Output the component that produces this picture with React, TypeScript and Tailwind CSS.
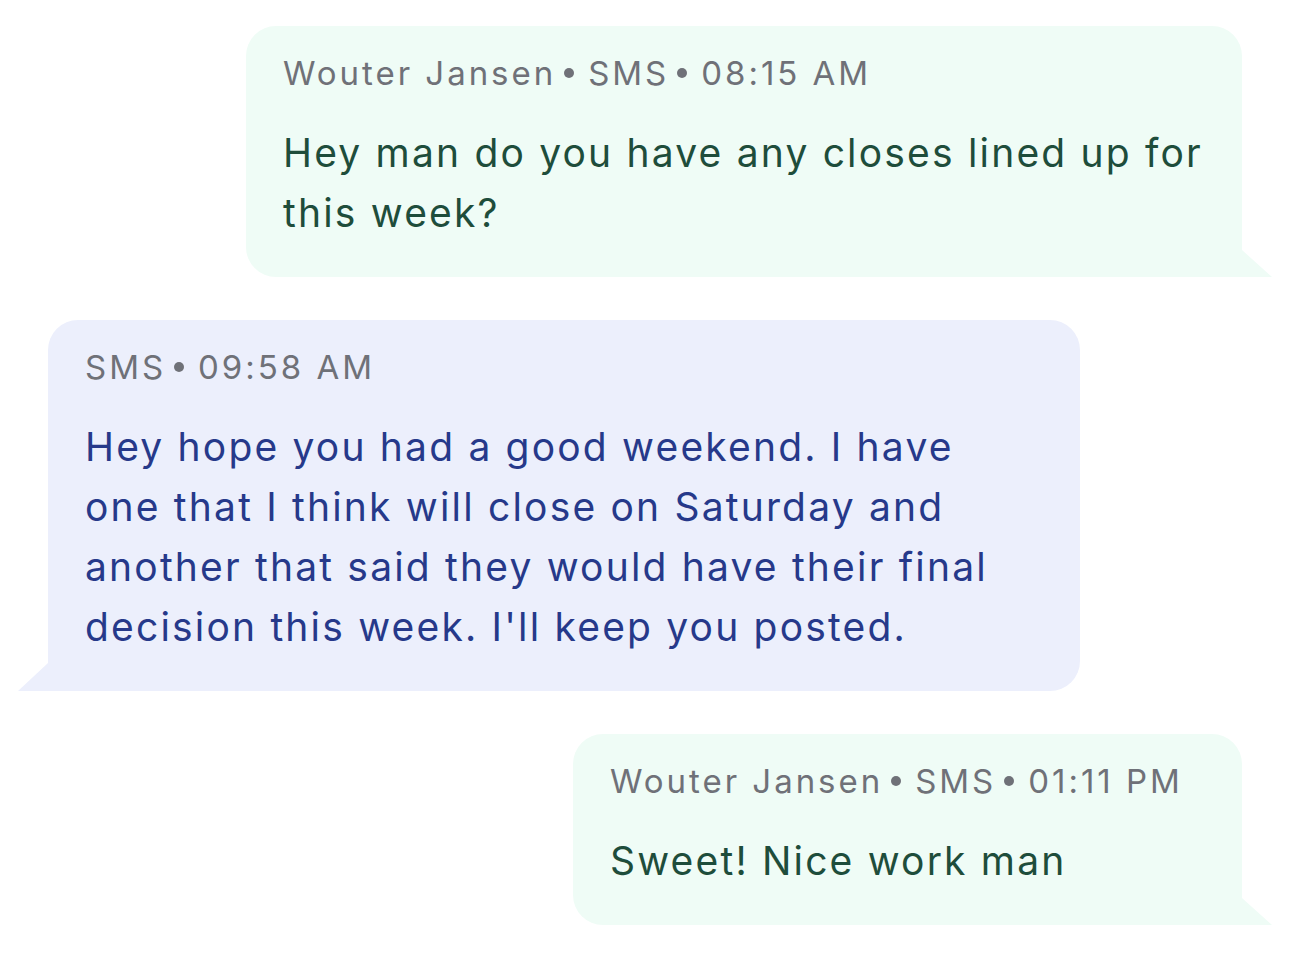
import React from 'react';

type Msg = {
  side: 'out' | 'in';
  meta: string[];
  lines: string[];
  width: string;
};

const messages: Msg[] = [
  {
    side: 'out',
    meta: ['Wouter Jansen', 'SMS', '08:15 AM'],
    lines: ['Hey man do you have any closes lined up for', 'this week?'],
    width: 'w-[996px]',
  },
  {
    side: 'in',
    meta: ['SMS', '09:58 AM'],
    lines: [
      'Hey hope you had a good weekend. I have',
      'one that I think will close on Saturday and',
      'another that said they would have their final',
      "decision this week. I'll keep you posted.",
    ],
    width: 'w-[1032px]',
  },
  {
    side: 'out',
    meta: ['Wouter Jansen', 'SMS', '01:11 PM'],
    lines: ['Sweet! Nice work man'],
    width: 'w-[669px]',
  },
];

// little corner tail under the bubble
const Tail = ({ side }: { side: 'out' | 'in' }) =>
  side === 'out' ? (
    <svg className="absolute bottom-0 -right-[30px] w-[30px] h-[27px]" viewBox="0 0 30 27">
      <path d="M0 0 L30 27 L0 27 Z" fill="#effcf6" />
    </svg>
  ) : (
    <svg className="absolute bottom-0 -left-[30px] w-[30px] h-[28px]" viewBox="0 0 30 28">
      <path d="M30 0 L0 28 L30 28 Z" fill="#eceffc" />
    </svg>
  );

const Bubble = ({ msg }: { msg: Msg }) => {
  const out = msg.side === 'out';
  return (
    <div
      className={`relative ${msg.width} pl-[37px] pr-[36px] pt-[22px] pb-[34px] rounded-[30px] ${
        out ? 'self-end bg-[#effcf6] rounded-br-none' : 'self-start bg-[#eceffc] rounded-bl-none'
      }`}
    >
      <div className="flex items-center text-[33px] leading-[50px] text-[#6f7178] tracking-[0.09em]">
        {msg.meta.map((m, i) => (
          <React.Fragment key={i}>
            {i > 0 && <span className="ml-[8px] mr-[14px] w-[10px] h-[10px] rounded-full bg-[#6f7178]" />}
            <span>{m}</span>
          </React.Fragment>
        ))}
      </div>
      <p
        className={`mt-[25px] text-[39px] leading-[60px] tracking-[0.056em] whitespace-nowrap ${
          out ? 'text-[#1e4d3b]' : 'text-[#26398a]'
        }`}
      >
        {msg.lines.map((l, i) => (
          <span key={i} className="block">
            {l}
          </span>
        ))}
      </p>
      <Tail side={msg.side} />
    </div>
  );
};

export default function App() {
  return (
    <div
      className="w-[1290px] h-[959px] bg-white px-[48px] pt-[26px] flex flex-col gap-[43px]"
      style={{ fontFamily: 'Inter, "Noto Sans", sans-serif' }}
    >
      {messages.map((m, i) => (
        <Bubble key={i} msg={m} />
      ))}
    </div>
  );
}
